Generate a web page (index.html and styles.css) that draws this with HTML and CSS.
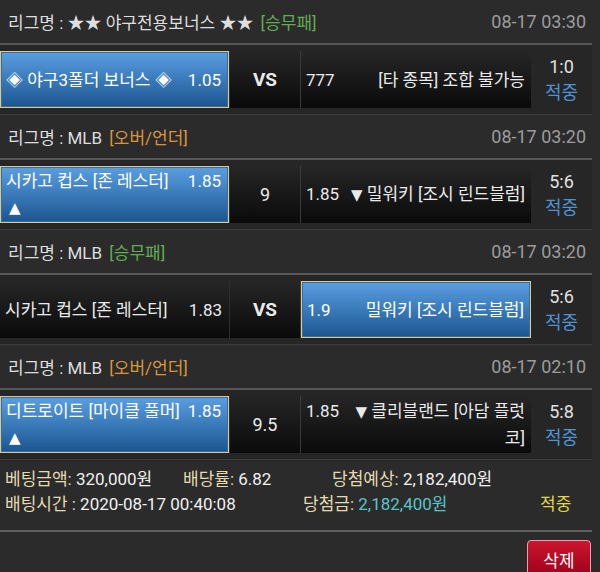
FILE: index.html
```html
<!DOCTYPE html>
<html lang="ko">
<head>
    <meta charset="UTF-8">
    <meta name="viewport" content="width=device-width, initial-scale=1.0">
    <title>베팅내역</title>
    <link rel="stylesheet" href="styles.css">
</head>
<body>
    <div class="slip">
        <div class="game">
            <div class="game-head">
                <span class="league">리그명 : ★★ 야구전용보너스 ★★ <span class="type wdl">[승무패]</span></span>
                <span class="time">08-17 03:30</span>
            </div>
            <div class="game-row">
                <div class="pick home on">
                    <div class="txt"><span class="odds">1.05</span>◈ 야구3폴더 보너스 ◈</div>
                </div>
                <div class="pick mid"><b>VS</b></div>
                <div class="pick away">
                    <div class="txt"><span class="odds">777</span>[타 종목] 조합 불가능</div>
                </div>
                <div class="result"><span>1:0</span><span class="hit">적중</span></div>
            </div>
        </div>

        <div class="game">
            <div class="game-head">
                <span class="league">리그명 : MLB <span class="type ou">[오버/언더]</span></span>
                <span class="time">08-17 03:20</span>
            </div>
            <div class="game-row">
                <div class="pick home on">
                    <div class="txt"><span class="odds">1.85</span>시카고 컵스 [존 레스터]<div class="dir"><span class="arr">▲</span></div></div>
                </div>
                <div class="pick mid">9</div>
                <div class="pick away">
                    <div class="txt"><span class="odds">1.85</span><span class="arr">▼</span> 밀워키 [조시 린드블럼]</div>
                </div>
                <div class="result"><span>5:6</span><span class="hit">적중</span></div>
            </div>
        </div>

        <div class="game">
            <div class="game-head">
                <span class="league">리그명 : MLB <span class="type wdl">[승무패]</span></span>
                <span class="time">08-17 03:20</span>
            </div>
            <div class="game-row">
                <div class="pick home">
                    <div class="txt"><span class="odds">1.83</span>시카고 컵스 [존 레스터]</div>
                </div>
                <div class="pick mid"><b>VS</b></div>
                <div class="pick away on">
                    <div class="txt"><span class="odds">1.9</span>밀워키 [조시 린드블럼]</div>
                </div>
                <div class="result"><span>5:6</span><span class="hit">적중</span></div>
            </div>
        </div>

        <div class="game">
            <div class="game-head">
                <span class="league">리그명 : MLB <span class="type ou">[오버/언더]</span></span>
                <span class="time">08-17 02:10</span>
            </div>
            <div class="game-row">
                <div class="pick home on">
                    <div class="txt"><span class="odds">1.85</span>디트로이트 [마이클 풀머]<div class="dir"><span class="arr">▲</span></div></div>
                </div>
                <div class="pick mid">9.5</div>
                <div class="pick away">
                    <div class="txt"><span class="odds">1.85</span>&nbsp;<span class="arr">▼</span> 클리블랜드 [아담 플럿코]</div>
                </div>
                <div class="result"><span>5:8</span><span class="hit">적중</span></div>
            </div>
        </div>

        <div class="summary">
            <div class="sum-row">
                <span class="c1"><span class="lbl">베팅금액:</span> 320,000원</span>
                <span class="c2"><span class="lbl">배당률:</span> 6.82</span>
                <span class="c3"><span class="lbl">당첨예상:</span> 2,182,400원</span>
            </div>
            <div class="sum-row">
                <span class="c4"><span class="lbl">배팅시간 :</span> 2020-08-17 00:40:08</span>
                <span class="c5"><span class="lbl">당첨금:</span> <span class="won">2,182,400원</span></span>
                <span class="state">적중</span>
            </div>
        </div>

        <div class="actions">
            <button type="button" class="btn-del">삭제</button>
        </div>
    </div>
</body>
</html>
```

FILE: styles.css
```css
html, body {
    margin: 0;
    padding: 0;
}
body {
    background: #2b2b2b;
    color: #e4e4e4;
    font-family: Roboto, "Noto Sans CJK KR", sans-serif;
    font-size: 17px;
}
.slip {
    width: 592px;
}
/* league header */
.game-head {
    display: flex;
    justify-content: space-between;
    align-items: center;
    height: 43px;
    padding: 0 6px 0 8px;
    border-bottom: 2px solid #575757;
}
.league {
    color: #dedede;
}
.type {
    margin-left: 3px;
}
.type.wdl {
    color: #62ad52;
}
.type.ou {
    color: #d8963c;
}
.time {
    color: #9c9c9c;
    font-size: 18px;
}
/* bet row */
.game-row {
    display: flex;
    padding: 6px 0;
    background: #262626;
    border-bottom: 1px solid #3c3c3c;
}
.pick {
    display: flex;
    align-items: center;
    box-sizing: border-box;
    height: 57px;
    background: linear-gradient(#262626, #0a0a0a);
    color: #eaeaea;
}
.home {
    width: 229px;
    padding: 0 7px 0 5px;
}
.mid {
    width: 72px;
    justify-content: center;
    border-left: 1px solid #2e2e2e;
    border-right: 1px solid #3a3a3a;
    font-size: 18px;
}
.mid b {
    font-size: 19px;
}
.away {
    width: 230px;
    padding: 0 6px 0 5px;
}
.pick.on {
    background: linear-gradient(#5a9fe2, #1b5590);
    border: 1px solid #d8cb90;
    box-shadow: inset 0 0 0 1px #3e6c9a;
    color: #fff;
}
.txt {
    width: 100%;
    line-height: 26px;
}
.home .odds {
    float: right;
}
.away .txt {
    text-align: right;
}
.away .odds {
    float: left;
    margin-right: 6px;
}
.arr {
    font-size: 15px;
    font-family: "DejaVu Sans", sans-serif;
}
.dir {
    text-align: left;
    padding-left: 3px;
}
/* result column */
.result {
    flex: 1;
    display: flex;
    flex-direction: column;
    align-items: center;
    justify-content: center;
    line-height: 26px;
    font-size: 18px;
    color: #e0e0e0;
}
.hit {
    color: #4f93d4;
}
/* summary */
.summary {
    padding: 7px 5px 13px;
    border-bottom: 2px solid #5f5f5f;
}
.sum-row {
    display: flex;
    line-height: 25px;
    color: #f0f0f0;
}
.lbl {
    color: #e4dbb0;
}
.c1 {
    width: 178px;
}
.c2 {
    width: 149px;
}
.c4 {
    width: 298px;
}
.c5 {
    width: 237px;
}
.won {
    color: #58c4c8;
}
.state {
    color: #e2d54c;
}
/* buttons */
.actions {
    display: flex;
    justify-content: flex-end;
    padding: 8px 1px 0;
}
.btn-del {
    width: 64px;
    height: 38px;
    background: linear-gradient(#cc1530, #9d0019);
    color: #fff;
    border: 1px solid #e7a3ac;
    border-radius: 4px;
    font-family: Roboto, "Noto Sans CJK KR", sans-serif;
    font-size: 17px;
}
```
